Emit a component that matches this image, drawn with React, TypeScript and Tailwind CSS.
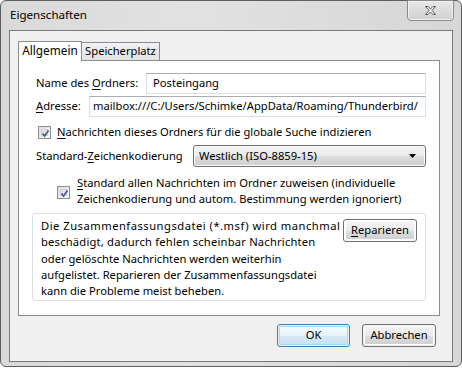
import React from "react";

const U = ({ c }: { c: string }) => <span className="underline underline-offset-[2px]">{c}</span>;

function Check() {
  return (
    <div className="w-[13px] h-[13px] border border-[#8e8f8f] bg-gradient-to-br from-[#dcdcdc] to-[#fbfbfb] p-[2px] shrink-0">
      <div className="w-full h-full border border-[#d3d3d3] bg-gradient-to-br from-[#d6dbe3] to-[#f4f6f8] relative">
        <svg width="11" height="11" viewBox="0 0 11 11" className="absolute left-[-2px] top-[-2px]">
          <path d="M2.5 5.5 L4.5 8 L8.5 2.5" fill="none" stroke="#4a5f97" strokeWidth="1.8" />
        </svg>
      </div>
    </div>
  );
}

function Btn({ children, w, def }: { children: React.ReactNode; w: string; def?: boolean }) {
  return (
    <div
      className={`${w} h-[23px] rounded-[3px] border ${
        def ? "border-[#3c7fb1]" : "border-[#707070]"
      } p-[1px] flex`}
    >
      <div
        className={`flex-1 rounded-[2px] flex items-center justify-center ${
          def
            ? "bg-[linear-gradient(#f4fafe_0%,#e6f2fa_50%,#d6e8f4_51%,#c9e0f0_100%)] shadow-[inset_0_0_0_1px_#9cdcf8]"
            : "bg-[linear-gradient(#f2f2f2_0%,#ebebeb_50%,#dddddd_51%,#cfcfcf_100%)] shadow-[inset_0_0_0_1px_#fcfcfc]"
        }`}
      >
        {children}
      </div>
    </div>
  );
}

export default function App() {
  return (
    <div
      className="w-[462px] h-[368px] bg-white text-[11.2px] text-black"
      style={{ fontFamily: '"Noto Sans", "Open Sans", sans-serif' }}
    >
      <div className="w-[462px] h-[367px] rounded-[6px] border border-[#5f5f5f] bg-[linear-gradient(90deg,#d9d9d9,#e2e2e2_40%,#d6d6d6)] flex flex-col relative">
        {/* Title bar */}
        <div className="h-[29px] flex items-center pl-[9px] pb-[1px] text-[11.6px]">Eigenschaften</div>
        <div className="absolute right-[7px] top-[-1px] w-[47px] h-[21px] rounded-b-[4px] border border-[#8a8a8a] bg-[linear-gradient(#e8e8e8,#d0d0d0)] flex items-center justify-center shadow-[inset_0_0_0_1px_#f2f2f2]">
          <svg width="13" height="11" viewBox="0 0 13 11">
            <path
              d="M1.5 1.5 H4 L6.5 4 L9 1.5 H11.5 L8 5.5 L11.5 9.5 H9 L6.5 7 L4 9.5 H1.5 L5 5.5 Z"
              fill="#f4f4f4"
              stroke="#5a5a5a"
              strokeWidth="1"
              strokeLinejoin="round"
            />
          </svg>
        </div>
        {/* Client */}
        <div className="ml-[8px] w-[444px] h-[332px] border border-[#7a7a7a] bg-[#f0f0f0] flex flex-col">
          <div className="pl-[8px] pt-[10px]">
            {/* tabs */}
            <div className="flex items-end h-[19px] relative z-10">
              <div className="w-[64px] h-[20px] mb-[-1px] border border-b-0 border-[#898c95] bg-white flex items-center justify-center pb-[1px] text-[11.8px]">
                Allgemein
              </div>
              <div className="w-[78px] h-[18px] border border-l-0 border-b-0 border-[#898c95] bg-[linear-gradient(#f2f2f2,#e3e3e3)] flex items-center justify-center">
                Speicherplatz
              </div>
            </div>
            {/* panel */}
            <div className="w-[422px] h-[256px] border border-[#898c95] bg-white flex flex-col pl-[17px] pr-[13px]">
              <div className="mt-[12px] flex items-center h-[21px]">
                <div className="w-[110px] whitespace-nowrap">
                  Name des <U c="O" />rdners:
                </div>
                <div className="flex-1 h-[21px] border border-[#dbdfe6] border-t-[#abadb3] flex items-center pl-[6px]">
                  Posteingang
                </div>
              </div>
              <div className="mt-[2px] flex items-center h-[21px]">
                <div className="w-[53px] whitespace-nowrap">
                  <U c="A" />dresse:
                </div>
                <div className="flex-1 h-[21px] border border-[#dbdfe6] border-t-[#abadb3] flex items-center pl-[3px] overflow-hidden whitespace-nowrap">
                  mailbox:///C:/Users/Schimke/AppData/Roaming/Thunderbird/
                </div>
              </div>
              <div className="mt-[7px] flex items-center h-[16px] pl-[2px] gap-[6px]">
                <Check />
                <span className="whitespace-nowrap">
                  <U c="N" />achrichten dieses Ordners für die globale Suche indizieren
                </span>
              </div>
              <div className="mt-[5px] flex items-center h-[22px]">
                <div className="w-[157px] whitespace-nowrap">
                  Standard-<U c="Z" />eichenkodierung
                </div>
                <div className="w-[233px] h-[22px] rounded-[3px] border border-[#707070] bg-[linear-gradient(#f2f2f2_0%,#ebebeb_50%,#dddddd_51%,#cfcfcf_100%)] shadow-[inset_0_0_0_1px_#fbfbfb] flex items-center pl-[5px] pr-[8px] justify-between">
                  <span>Westlich (ISO-8859-15)</span>
                  <svg width="8" height="4" viewBox="0 0 8 4">
                    <path d="M0 0 H7 L3.5 4 Z" fill="#000" />
                  </svg>
                </div>
              </div>
              <div className="mt-[8px] flex pl-[21px] gap-[7px]">
                <div className="pt-[11px]">
                  <Check />
                </div>
                <div className="leading-[16px] whitespace-nowrap">
                  <U c="S" />tandard allen Nachrichten im Ordner zuweisen (individuelle
                  <br />
                  Zeichenkodierung und autom. Bestimmung werden ignoriert)
                </div>
              </div>
              <div className="mt-[6px] ml-[-4px] w-[394px] h-[88px] rounded-[3px] border border-[#d5dfe5] flex pl-[8px] pt-[4px] pr-[8px]">
                <div className="flex-1 leading-[16.25px] whitespace-nowrap">
                  <div className="tracking-[0.5px]">Die Zusammenfassungsdatei (*.msf) wird manchmal</div>
                  <div className="tracking-[0.2px]">beschädigt, dadurch fehlen scheinbar Nachrichten</div>
                  <div>oder gelöschte Nachrichten werden weiterhin</div>
                  <div>aufgelistet. Reparieren der Zusammenfassungsdatei</div>
                  <div>kann die Probleme meist beheben.</div>
                </div>
                <div className="pt-[1px]">
                  <Btn w="w-[74px]">
                    <span>
                      <U c="R" />eparieren
                    </span>
                  </Btn>
                </div>
              </div>
            </div>
          </div>
          <div className="mt-[8px] flex justify-end gap-[12px] pr-[16px]">
            <Btn w="w-[73px]" def>
              OK
            </Btn>
            <Btn w="w-[74px]">Abbrechen</Btn>
          </div>
        </div>
      </div>
    </div>
  );
}
